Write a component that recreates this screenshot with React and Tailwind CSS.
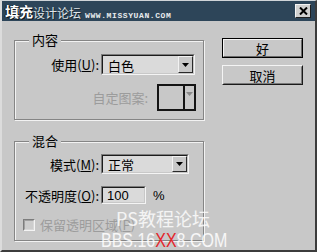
import React from "react";

const Tri = ({ c = "#000" }) => (
  <svg width="7" height="4" viewBox="0 0 7 4">
    <path d="M0 0h7L3.5 4z" fill={c} />
  </svg>
);

function Select({ w, h, children }) {
  return (
    <div className={`${w} ${h} border border-t-[#7c7c7c] border-l-[#7c7c7c] border-r-[#f4f4f4] border-b-[#f4f4f4]`}>
      <div className="h-full flex border border-t-[#1c1c1c] border-l-[#1c1c1c] border-r-[#c8c8c8] border-b-[#c8c8c8] bg-[#dadada]">
        <div className="flex-1 flex items-center pl-[5px] pt-[1px] text-[13px] leading-none text-black">{children}</div>
        <div className="w-[15px] h-full flex items-center justify-center bg-[#c8c8c8] border border-t-[#f2f2f2] border-l-[#f2f2f2] border-r-[#2a2a2a] border-b-[#2a2a2a]">
          <Tri />
        </div>
      </div>
    </div>
  );
}

function Group({ label, className, children }) {
  return (
    <div className={`relative border border-[#858585] shadow-[inset_1px_1px_0_#f2f2f2,1px_1px_0_#f2f2f2] ${className}`}>
      <span className="absolute -top-[9px] left-[14px] px-[3px] bg-[#c8c8c8] text-[13px] leading-[16px] text-black">{label}</span>
      {children}
    </div>
  );
}

export default function App() {
  return (
    <div className="relative w-[317px] h-[252px] overflow-hidden bg-[#c8c8c8] border-t border-t-[#cfd4d8] border-l-2 border-l-[#dcdcdc] border-r-2 border-r-[#3c3c3c] border-b-2 border-b-[#3c3c3c] font-['Noto_Sans_CJK_SC',sans-serif] select-none">
      {/* title bar */}
      <div className="relative h-[20px] bg-[#2d4559] flex items-center pl-[3px] pr-[4px]">
        <span className="absolute left-[7px] top-[5px] text-[12px] leading-[14px] text-[#dfe4e8] [text-shadow:1px_1px_0_#1a2630]">思缘设计论坛</span>
        <span className="absolute left-[83px] top-[10px] w-[90px] text-[8px] leading-[9px] font-bold tracking-[0.6px] text-[#e8ecef] font-['Liberation_Mono',monospace] whitespace-nowrap [text-shadow:1px_0_0_#33495a,0_1px_0_#33495a]">WWW.MISSYUAN.COM</span>
        <span className="relative text-[14px] leading-[16px] font-bold text-white [text-shadow:1px_1px_0_#0e1820,-1px_0_0_#0e1820]">填充</span>
        <div className="relative ml-auto w-[16px] h-[14px] bg-[#d0d0d0] flex items-center justify-center border border-t-[#f4f4f4] border-l-[#f4f4f4] border-r-[#202020] border-b-[#202020]">
          <svg width="9" height="8" viewBox="0 0 9 8">
            <path d="M1 0.5L8 7.5M8 0.5L1 7.5" stroke="#000" strokeWidth="2" />
          </svg>
        </div>
      </div>

      {/* body */}
      <div className="flex pl-[12px]">
        {/* left column */}
        <div className="w-[190px] flex flex-col">
          <Group label="内容" className="mt-[19px] h-[80px] pt-[13px]">
            <div className="flex items-center">
              <div className="w-[84px] text-right text-[13px] leading-none text-black">
                使用(<span className="underline">U</span>):
              </div>
              <div className="ml-[2px]">
                <Select w="w-[94px]" h="h-[21px]">白色</Select>
              </div>
            </div>
            <div className="mt-[9px] flex items-center justify-end pr-[7px]">
              <div className="mr-[9px] text-[13px] leading-none text-[#9c9c9c]">自定图案:</div>
              <div className="w-[39px] h-[27px] border-2 border-[#141414] flex">
                <div className="flex-1" />
                <div className="w-[11px] h-full border-l-2 border-[#141414] flex items-start justify-center pt-[6px]">
                  <Tri c="#8a8a8a" />
                </div>
              </div>
            </div>
          </Group>

          <Group label="混合" className="mt-[21px] h-[100px] pt-[12px]">
            <div className="flex items-center">
              <div className="w-[84px] text-right text-[13px] leading-none text-black">
                模式(<span className="underline">M</span>):
              </div>
              <div className="ml-[2px]">
                <Select w="w-[88px]" h="h-[20px]">正常</Select>
              </div>
            </div>
            <div className="mt-[12px] flex items-center">
              <div className="w-[84px] text-right text-[13px] leading-none text-black">
                不透明度(<span className="underline">O</span>):
              </div>
              <div className="ml-[2px] w-[45px] h-[18px] border border-t-[#7c7c7c] border-l-[#7c7c7c] border-r-[#f4f4f4] border-b-[#f4f4f4]">
                <div className="h-full border border-t-[#1c1c1c] border-l-[#1c1c1c] border-r-[#c8c8c8] border-b-[#c8c8c8] bg-[#dadada] flex items-center pl-[4px] pt-[1px] text-[13px] leading-none text-black font-['Liberation_Sans',sans-serif]">
                  100
                </div>
              </div>
              <div className="ml-[7px] text-[13px] leading-none text-black font-['Liberation_Sans',sans-serif]">%</div>
            </div>
            <div className="mt-[14px] ml-[8px] flex items-center">
              <div className="w-[12px] h-[12px] border border-t-[#7c7c7c] border-l-[#7c7c7c] border-r-[#f4f4f4] border-b-[#f4f4f4]">
                <div className="h-full border border-t-[#a0a0a0] border-l-[#a0a0a0] border-r-[#d8d8d8] border-b-[#d8d8d8] bg-[#cdcdcd]" />
              </div>
              <div className="ml-[5px] text-[13px] leading-none text-[#9c9c9c]">
                保留透明区域(<span className="underline">P</span>)
              </div>
            </div>
          </Group>
        </div>

        {/* right column */}
        <div className="ml-[18px] w-[81px] pt-[17px] flex flex-col">
          <div className="h-[20px] border border-black">
            <div className="h-full border border-t-[#f4f4f4] border-l-[#f4f4f4] border-r-[#6a6a6a] border-b-[#6a6a6a] bg-[#c8c8c8] flex items-center justify-center text-[13px] leading-none text-black">
              好
            </div>
          </div>
          <div className="mt-[7px] h-[20px] border border-t-[#f4f4f4] border-l-[#f4f4f4] border-r-[#1a1a1a] border-b-[#1a1a1a]">
            <div className="h-full border border-t-[#c8c8c8] border-l-[#c8c8c8] border-r-[#7a7a7a] border-b-[#7a7a7a] bg-[#c8c8c8] flex items-center justify-center text-[13px] leading-none text-black">
              取消
            </div>
          </div>
        </div>
      </div>

      {/* watermark overlay */}
      <div className="absolute left-[114px] top-[208px] text-[18px] leading-[19px] text-white/80 whitespace-nowrap">PS教程论坛</div>
      <div className="absolute left-[99px] top-[229px] text-[20px] leading-[20px] text-white/85 whitespace-nowrap origin-left scale-x-[0.8] font-['Liberation_Sans',sans-serif]">
        BBS.16<span className="text-[#e4262c]">XX</span>8.COM
      </div>
    </div>
  );
}
